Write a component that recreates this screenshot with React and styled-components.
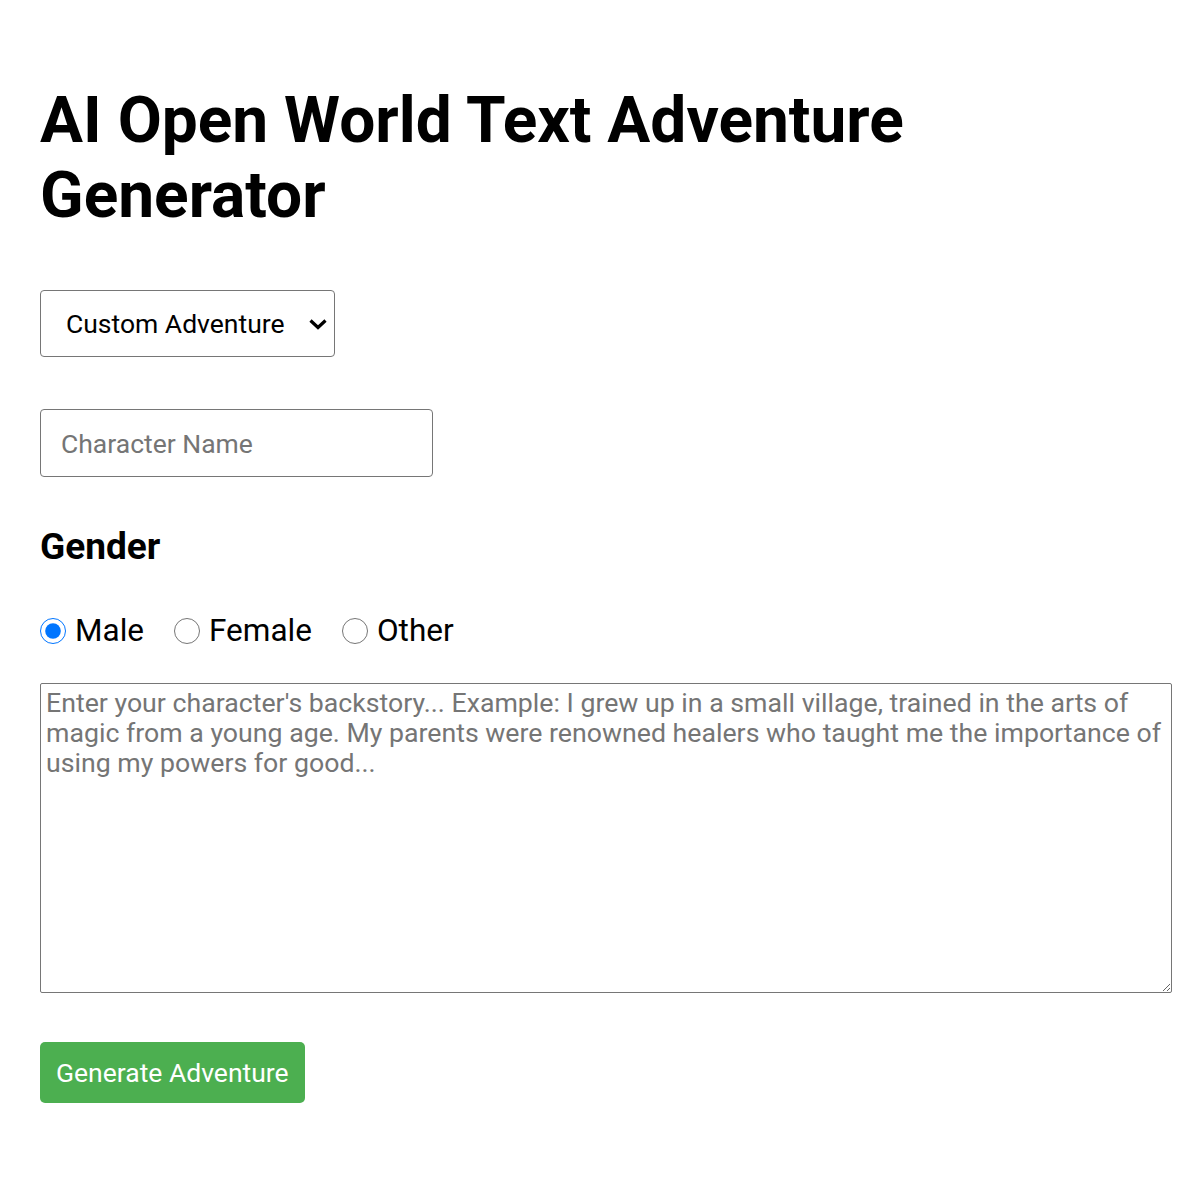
import React from 'react'
import styled, { createGlobalStyle } from 'styled-components'

const GlobalStyle = createGlobalStyle`
    body{
        margin: 0;
        background: #FFF;
        font-family: Roboto, 'Liberation Sans', sans-serif;
    }
`

const Page = styled.div`
    padding: 40px;
    display: flex;
    flex-direction: column;
    align-items: flex-start;
`

const Title = styled.h1`
    font-size: 64px;
    font-weight: 700;
    line-height: 75px;
    margin: 43px 0 57px;
    max-width: 900px;
    color: #000;
`

const SelectWrap = styled.div`
    position: relative;
    width: 295px;
    margin-bottom: 52px;

    svg{
        position: absolute;
        right: 7px;
        top: 50%;
        transform: translateY(-50%);
        pointer-events: none;
    }
`

const Select = styled.select`
    appearance: none;
    width: 100%;
    height: 67px;
    font-family: Roboto, sans-serif;
    font-size: 26.5px;
    padding: 0 30px 0 25px;
    border: 1px solid #767676;
    border-radius: 4px;
    background: #FFF;
    color: #000;
`

const TextInput = styled.input`
    box-sizing: border-box;
    width: 393px;
    height: 68px;
    padding: 0 20px;
    font-family: Roboto, sans-serif;
    font-size: 26.5px;
    border: 1px solid #767676;
    border-radius: 4px;
    margin-bottom: 48px;

    &::placeholder{
        color: #757575;
    }
`

const Label = styled.h3`
    font-size: 37px;
    font-weight: 700;
    line-height: 44px;
    margin: 0 0 43px;
`

const RadioRow = styled.div`
    display: flex;
    align-items: center;
    gap: 30px;
    margin-bottom: 33px;
`

const RadioLabel = styled.label`
    display: flex;
    align-items: center;
    gap: 9px;
    font-size: 31.5px;
    line-height: 38px;

    input{
        width: 26px;
        height: 26px;
        margin: 0;
    }
`

const Story = styled.textarea`
    width: 1120px;
    height: 300px;
    padding: 4px 5px;
    font-family: Roboto, sans-serif;
    font-size: 26.7px;
    line-height: 30px;
    border: 1px solid #767676;
    border-radius: 2px;
    margin: 0 0 49px;

    &::placeholder{
        color: #757575;
    }
`

const Button = styled.button`
    height: 61px;
    padding: 0 16px;
    background: #4CAF50;
    color: #FFF;
    font-family: Roboto, sans-serif;
    font-size: 26.5px;
    border: none;
    border-radius: 5px;
`

function App() {
    const [gender, setGender] = React.useState('male')
    return (
        <Page>
            <GlobalStyle />
            <Title>AI Open World Text Adventure Generator</Title>
            <SelectWrap>
                <Select defaultValue="custom">
                    <option value="custom">Custom Adventure</option>
                </Select>
                <svg width="20" height="12" viewBox="0 0 20 12">
                    <path d="M2.5 2.5 L10 9.5 L17.5 2.5" fill="none" stroke="#000" strokeWidth="3.2" />
                </svg>
            </SelectWrap>
            <TextInput type="text" placeholder="Character Name" />
            <Label>Gender</Label>
            <RadioRow>
                {['Male', 'Female', 'Other'].map(g => (
                    <RadioLabel key={g}>
                        <input
                            type="radio"
                            name="gender"
                            checked={gender === g.toLowerCase()}
                            onChange={() => setGender(g.toLowerCase())}
                        />
                        {g}
                    </RadioLabel>
                ))}
            </RadioRow>
            <Story placeholder="Enter your character's backstory... Example: I grew up in a small village, trained in the arts of magic from a young age. My parents were renowned healers who taught me the importance of using my powers for good..." />
            <Button>Generate Adventure</Button>
        </Page>
    )
}

export default App
